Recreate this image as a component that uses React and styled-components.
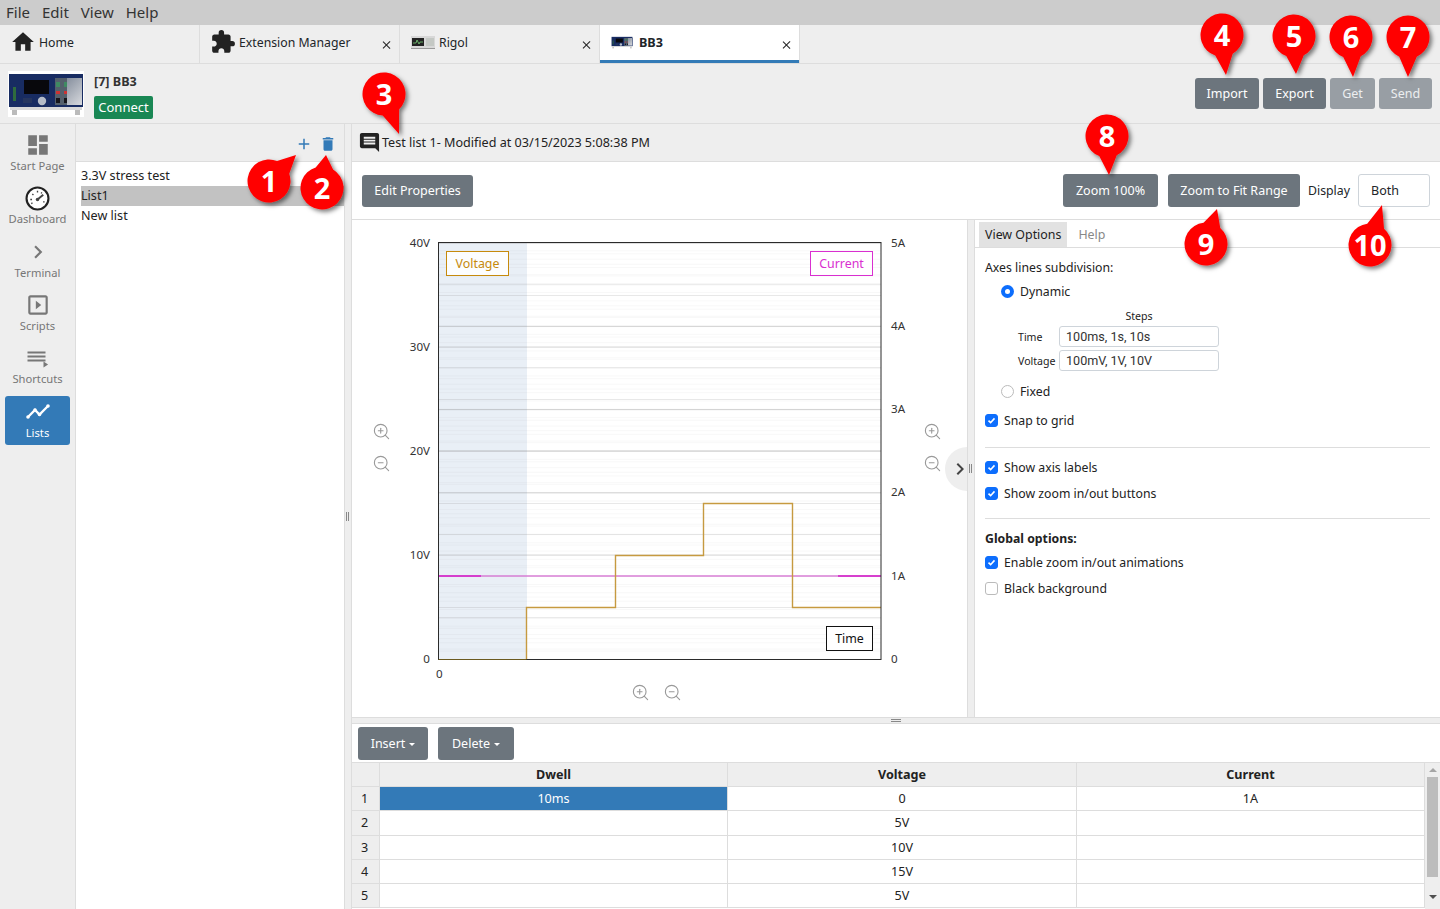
import React from 'react';
import styled, { createGlobalStyle } from 'styled-components';
import { MdHome, MdDashboard, MdChevronRight, MdSlideshow, MdDelete, MdAdd, MdMessage, MdExtension } from 'react-icons/md';
import { ZoomIn, ZoomOut } from 'lucide-react';

const UI = '"Noto Sans", "Open Sans", sans-serif';
const ALT = 'Roboto, "Noto Sans", sans-serif';

const Global = createGlobalStyle`
  html, body { margin: 0; padding: 0; background: #eee; }
  * { box-sizing: border-box; }
  body { font-family: ${UI}; color: #212529; }
`;

const Page = styled.div`
  position: relative; width: 1440px; height: 909px; overflow: hidden;
  display: flex; flex-direction: column; background: #eee; font-size: 13px;
`;
const MenuBar = styled.div`
  height: 25px; background: #ccc; display: flex; align-items: center; padding: 0 0 1px 6px; gap: 12px;
  font-size: 15px; color: #333; flex: none;
`;
const TabBar = styled.div`
  height: 39px; display: flex; flex: none; background: #eee; border-bottom: 1px solid #ddd;
`;
const Tab = styled.div`
  width: 200px; height: 38px; position: relative; display: flex; align-items: center; gap: ${p => p.$gap}px;
  padding-left: ${p => p.$pad}px; padding-bottom: 4px;
  background: ${p => (p.$active ? '#fff' : 'transparent')};
  border-right: 1px solid #ddd; font-size: ${p => (p.$active ? 12.6 : 12.27)}px;
  font-weight: ${p => (p.$active ? 700 : 400)};
  box-shadow: ${p => (p.$active ? 'inset 0 -3px 0 #337bb7' : 'none')};
`;
const TabClose = styled.span`
  position: absolute; right: 7px; top: 15px; width: 10px; height: 10px;
  &::before, &::after { content: ''; position: absolute; left: 4px; top: 0; width: 1.3px; height: 10px; background: #222; }
  &::before { transform: rotate(45deg); }
  &::after { transform: rotate(-45deg); }
`;
const PuzzleIcon = styled(MdExtension)` margin-right: -3px; color: #222; flex: none; `;
const DeviceBar = styled.div`
  height: 60px; flex: none; display: flex; align-items: center; padding: 0 8px; border-bottom: 1px solid #ddd;
`;
const DeviceInfo = styled.div`
  margin-left: 10px; display: flex; flex-direction: column; gap: 6px; align-items: flex-start; padding-top: 4px;
`;
const DeviceName = styled.div` font-weight: 700; font-size: 12.6px; line-height: 17px; color: #333; `;
const Connect = styled.div`
  background: #198754; color: #fff; border-radius: 2px; height: 23px; width: 59px; display: flex; align-items: center; justify-content: center; font-size: 13px; padding-bottom: 1px;
`;
const Spacer = styled.div` flex: 1; `;
const Actions = styled.div` display: flex; gap: 4px; `;
const Button = styled.div`
  background: ${p => (p.$off ? '#989ea4' : '#6c757d')}; color: ${p => (p.$off ? '#eceef0' : '#fff')}; border-radius: 3px;
  height: ${p => p.$h || 33}px; width: ${p => p.$w}px; display: flex; align-items: center; justify-content: center;
  font-size: 12.5px; flex: none; gap: 4px; padding-bottom: 1px;
`;
const Caret = styled.span`
  width: 0; height: 0; border-left: 3.5px solid transparent; border-right: 3.5px solid transparent; border-top: 3.5px solid #fff; margin-top: 2px;
`;
const Body = styled.div` flex: 1; display: flex; min-height: 0; `;
const Sidebar = styled.div`
  width: 76px; flex: none; border-right: 1px solid #ddd; padding: 8px 5px 0; display: flex; flex-direction: column;
`;
const NavItem = styled.div`
  height: ${p => (p.$active ? 49 : 53.3)}px; flex: none; display: flex; flex-direction: column; align-items: center;
  color: ${p => (p.$active ? '#fff' : '#767676')}; background: ${p => (p.$active ? '#337ab7' : 'transparent')};
  border-radius: 3px; font-size: 11.2px; white-space: nowrap; margin-top: ${p => (p.$active ? -2.5 : 0)}px;
`;
const NavIcon = styled.div`
  height: 26px; flex: none; display: flex; align-items: center; justify-content: center;
  margin-top: ${p => (p.$active ? 2 : 0)}px; margin-bottom: ${p => (p.$active ? 1 : 0)}px;
`;
const ListPanel = styled.div` width: 268px; flex: none; display: flex; flex-direction: column; `;
const ListHead = styled.div`
  height: 38px; flex: none; display: flex; justify-content: flex-end; align-items: center; padding: 2px 7px 0 0; gap: 6px; border-bottom: 1px solid #ddd; color: #337ab7;
`;
const ListBody = styled.div` flex: 1; background: #fff; padding-top: 4px; `;
const ListRow = styled.div`
  height: 20px; line-height: 19px; margin-left: 5px; font-size: 12.6px; color: #222;
  background: ${p => (p.$sel ? '#c2c2c2' : 'transparent')};
`;
const SplitV = styled.div`
  width: 8px; flex: none; background: #eee; border-left: 1px solid #ddd; border-right: 1px solid #ddd;
  display: flex; align-items: center; justify-content: center; gap: 1px; padding-right: 1px;
  &::before, &::after { content: ''; width: 1px; height: 9px; background: #888; }
`;
const Main = styled.div` flex: 1; min-width: 0; display: flex; flex-direction: column; `;
const MainHead = styled.div`
  height: 38px; flex: none; display: flex; align-items: center; padding-left: 6px; gap: 1px; font-size: 12.6px; border-bottom: 1px solid #ddd; color: #222;
`;
const NoteIcon = styled(MdMessage)` transform: scaleX(-1); color: #222; flex: none; `;
const Toolbar = styled.div`
  height: 58px; flex: none; background: #fff; border-bottom: 1px solid #ddd; display: flex; align-items: center; padding: 0 10px; gap: 10px;
`;
const DisplayLabel = styled.div` font-size: 12.3px; margin: 0 -2px 1px; width: 42px; flex: none; `;
const DisplaySelect = styled.div`
  width: 72px; height: 33px; border: 1px solid #ced4da; border-radius: 3px; display: flex; align-items: center; padding: 0 0 1px 12px; font-size: 12.5px; background: #fff;
`;
const Work = styled.div` height: 497px; flex: none; display: flex; background: #fff; `;
const ChartCol = styled.div` width: 615px; flex: none; position: relative; overflow: hidden; `;
const Collapse = styled.div`
  position: absolute; left: 593px; top: 227px; width: 44px; height: 44px; border-radius: 50%; background: #eee;
  display: flex; align-items: center; padding-left: 3px; color: #444;
`;
const ChartSvg = styled.svg` display: block; font-family: ${UI}; `;
const Options = styled.div` flex: 1; min-width: 0; display: flex; flex-direction: column; `;
const OptTabs = styled.div` height: 28px; flex: none; border-bottom: 1px solid #ddd; display: flex; padding: 2px 0 0 4px; `;
const OptTab = styled.div`
  height: 25px; display: flex; align-items: center; padding: 0 ${p => (p.$active ? 6 : 11)}px; font-size: 12.4px;
  background: ${p => (p.$active ? '#e2e2e2' : 'transparent')}; color: ${p => (p.$active ? '#222' : '#888')};
`;
const OptBody = styled.div` padding: 10px 10px 0; font-size: 12.27px; color: #222; `;
const OptTitle = styled.div` line-height: 20px; font-weight: ${p => (p.$bold ? 700 : 400)}; `;
const Check = styled.div`
  display: flex; align-items: center; gap: 6px; height: 20px; margin-top: ${p => p.$mt || 0}px; margin-left: ${p => p.$ml || 0}px;
`;
const Box = styled.span`
  width: 13px; height: 13px; border-radius: ${p => (p.$round ? '50%' : '3px')}; flex: none;
  background: ${p => (p.$on ? '#0d6efd' : '#fff')}; border: 1px solid ${p => (p.$on ? '#0d6efd' : '#bbb')};
  display: flex; align-items: center; justify-content: center;
  ${p => (p.$round && p.$on ? 'border-width: 0; &::after { content: ""; width: 5px; height: 5px; border-radius: 50%; background: #fff; }' : '')}
`;
const StepGrid = styled.div`
  display: grid; grid-template-columns: 41px 160px; row-gap: 3px; margin: 8px 0 0 33px; align-items: center; font-size: 10.6px;
`;
const StepHead = styled.div` grid-column: 2; text-align: center; height: 14px; line-height: 14px; `;
const StepLabel = styled.span` white-space: nowrap; `;
const StepInput = styled.div`
  height: 21px; border: 1px solid #ced4da; border-radius: 3px; display: flex; align-items: center; padding-left: 6px; font-family: ${ALT}; font-size: 12.6px; color: #333;
`;
const Rule = styled.div` height: 1px; background: #ddd; margin: ${p => p.$t}px 0 ${p => p.$b}px; `;
const SplitH = styled.div`
  height: 7px; flex: none; background: #eee; border-top: 1px solid #ddd; border-bottom: 1px solid #ddd; display: flex; flex-direction: column; align-items: center; justify-content: center; gap: 1px;
  &::before, &::after { content: ''; height: 1px; width: 10px; background: #888; }
`;
const Bottom = styled.div` flex: 1; min-height: 0; background: #fff; display: flex; flex-direction: column; `;
const TableBar = styled.div` height: 38px; flex: none; display: flex; gap: 10px; padding: 3px 6px 0; `;
const TableWrap = styled.div` flex: 1; display: flex; min-height: 0; border-top: 1px solid #ddd; `;
const Grid = styled.div`
  flex: 1; display: grid; grid-template-columns: 28px 348px 349px 1fr; grid-auto-rows: 24.2px; font-size: 12.6px; color: #222;
`;
const HeadCell = styled.div`
  background: #eee; border-right: 1px solid #ddd; border-bottom: 1px solid #ddd; display: flex; align-items: center; justify-content: center; font-weight: 700;
`;
const RowNo = styled.div`
  background: #eee; border-right: 1px solid #ddd; border-bottom: 1px solid #ddd; display: flex; align-items: center; justify-content: center; padding-right: 2px;
`;
const Cell = styled.div`
  background: ${p => (p.$sel ? '#337ab7' : '#fff')}; color: ${p => (p.$sel ? '#fff' : '#222')};
  border-right: 1px solid #ddd; border-bottom: 1px solid #ddd; display: flex; align-items: center; justify-content: center;
`;
const Scroll = styled.div`
  width: 15px; flex: none; background: #eee; display: flex; flex-direction: column; align-items: center; padding-top: 5px;
`;
const ArrowUp = styled.span` width: 0; height: 0; border-left: 4px solid transparent; border-right: 4px solid transparent; border-bottom: 4px solid #a5a5a5; `;
const ArrowDown = styled.span` width: 0; height: 0; border-left: 4px solid transparent; border-right: 4px solid transparent; border-top: 4px solid #505050; margin-top: 18px; `;
const Thumb = styled.div` width: 11px; height: 100px; background: #bcbcbc; margin-top: 5px; `;
const Overlay = styled.svg` position: absolute; left: 0; top: 0; pointer-events: none; font-family: ${UI}; `;

const DeviceArt = ({ w, h }) => (
  <svg width={w} height={h} viewBox="0 0 76 46" style={{ flex: 'none', display: 'block' }}>
    <defs>
      <linearGradient id="panelGrad" x1="0" y1="0" x2="1" y2="1">
        <stop offset="0" stopColor="#6f7a8c" />
        <stop offset="1" stopColor="#d8dade" />
      </linearGradient>
    </defs>
    <rect width="76" height="46" fill="#fff" />
    <rect x="3" y="7" width="72" height="28" fill="#243a74" />
    <rect x="1" y="3" width="74" height="33" fill="#182c62" />
    <rect x="16" y="9" width="25" height="14" fill="#08080c" />
    <rect x="47" y="7" width="27" height="27" fill="url(#panelGrad)" />
    <rect x="47" y="7" width="12" height="27" fill="#54606c" />
    <rect x="48" y="20" width="4" height="3" fill="#c33" />
    <rect x="56" y="20" width="3" height="3" fill="#c33" />
    <rect x="48" y="11" width="4" height="5" fill="#3f8a62" />
    <rect x="56" y="11" width="3" height="5" fill="#3f8a62" />
    <rect x="48" y="27" width="4" height="5" fill="#15151b" />
    <rect x="56" y="27" width="3" height="5" fill="#15151b" />
    <circle cx="34" cy="30" r="4.2" fill="#b5bcc8" />
    <rect x="5" y="16" width="3" height="14" fill="#2f6c3d" />
    <rect x="15" y="27" width="9" height="5" fill="#26365f" />
    <rect x="2" y="36" width="72" height="3" fill="#d8d8d8" />
    <rect x="4" y="39" width="5" height="5" fill="#bbb" />
    <rect x="67" y="39" width="5" height="5" fill="#bbb" />
  </svg>
);
const RigolArt = () => (
  <svg width="24" height="13" viewBox="0 0 24 13" style={{ flex: 'none' }}>
    <rect width="24" height="12" fill="#d8d8d8" />
    <rect x="1" y="2" width="12" height="8" fill="#222" />
    <path d="M2 7h3l1-3 2 4 1-2h3" stroke="#7c7" strokeWidth=".8" fill="none" />
    <rect x="15" y="2" width="8" height="8" fill="#c4c8c4" />
    <rect x="0" y="12" width="24" height="1" fill="#999" />
  </svg>
);
const Gauge = () => (
  <svg width="25" height="25" viewBox="0 0 26 26">
    <circle cx="13" cy="13" r="11.4" fill="#fff" stroke="#222" strokeWidth="2.2" />
    <path d="M13 14l6-5" stroke="#444" strokeWidth="2" />
    <circle cx="13" cy="14" r="1.8" fill="#444" />
    <path d="M5.5 14h1.8M7.6 8.3l1.2 1.1M13 5v1.7M17.5 6.6l-.7 1.2M18.8 16.5h1.6M6.5 18.3l1.3-.7" stroke="#444" strokeWidth="1.4" />
  </svg>
);
const ShortcutsIcon = () => (
  <svg width="26" height="26" viewBox="0 0 26 26">
    <path d="M2.5 7.5h18M2.5 11.5h18M2.5 15.5h18" stroke="#777" strokeWidth="2" fill="none" />
    <path d="M18.5 16.5l4.6 3-4.6 3z" fill="#777" />
  </svg>
);
const ListsIcon = () => (
  <svg width="26" height="26" viewBox="0 0 26 26">
    <path d="M3 19l7-7 4.5 4.5L23 8" stroke="#fff" strokeWidth="2.3" fill="none" />
    <g fill="#fff"><circle cx="3" cy="19" r="1.8" /><circle cx="10" cy="12" r="1.8" /><circle cx="14.5" cy="16.5" r="1.8" /><circle cx="23" cy="8" r="1.8" /></g>
  </svg>
);

const PLOT = { l: 438.5, r: 881, t: 242.5, b: 659.5 };
const range = (n, f) => Array.from({ length: n }, (_, i) => f(i));
const fine = [...range(41, i => 659.5 - i * 10.4), ...range(51, i => 659.5 - i * 8.34)];
const mid = [...range(9, i => 659.5 - i * 52).filter((_, i) => i % 2), ...range(11, i => 659.5 - i * 41.7).filter((_, i) => i % 2)];
const major = [...range(3, i => 555 - i * 104), ...range(4, i => 492.8 - i * 83.2)];
const leftTicks = [['40V', 243], ['30V', 347], ['20V', 451], ['10V', 555], ['0', 659]];
const rightTicks = [['5A', 243], ['4A', 326], ['3A', 409], ['2A', 492], ['1A', 576], ['0', 659]];

const Legend = ({ x, y, w, color, children }) => (
  <g>
    <rect x={x} y={y} width={w} height={24} fill="#fff" stroke={color} strokeWidth="1" fillOpacity=".85" />
    <text x={x + w / 2} y={y + 16} textAnchor="middle" fontSize="12.4" fill={color}>{children}</text>
  </g>
);

const Chart = () => (
  <ChartSvg width="615" height="497" viewBox="352 220 615 497">
    <rect x={PLOT.l} y={PLOT.t} width={88.5} height={417} fill="#e9eff6" />
    {fine.map((y, i) => <line key={i} x1={PLOT.l} x2={PLOT.r} y1={y} y2={y} stroke="#8a8a8a" strokeOpacity=".06" strokeWidth="1" />)}
    {mid.map((y, i) => <line key={i} x1={PLOT.l} x2={PLOT.r} y1={y} y2={y} stroke="#8a8a8a" strokeOpacity=".14" strokeWidth="1" />)}
    {major.map((y, i) => <line key={i} x1={PLOT.l} x2={PLOT.r} y1={y} y2={y} stroke="#8a8a8a" strokeOpacity=".32" strokeWidth="1" />)}
    <line x1={PLOT.l} x2={PLOT.r} y1="576" y2="576" stroke="#d97fd6" strokeWidth="1.4" />
    <line x1={PLOT.l} x2="481" y1="576" y2="576" stroke="#d321c9" strokeWidth="1.4" />
    <line x1="838" x2={PLOT.r} y1="576" y2="576" stroke="#d321c9" strokeWidth="1.4" />
    <path d="M526.5 659.5V607.5H615.5V555.5H703.5V503.5H792.5V607.5H881" fill="none" stroke="#c69a40" strokeWidth="1.4" />
    <rect x={PLOT.l} y={PLOT.t} width={PLOT.r - PLOT.l} height={PLOT.b - PLOT.t} fill="none" stroke="#2b2b2b" strokeWidth="1" />
    <line x1={PLOT.l} x2="526.5" y1="659.5" y2="659.5" stroke="#6b5a20" strokeWidth="1" />
    {leftTicks.map(([t, y]) => <text key={t} x="430" y={y + 4} textAnchor="end" fontSize="11.6" fill="#333">{t}</text>)}
    {rightTicks.map(([t, y]) => <text key={t} x="891" y={y + 4} fontSize="11.6" fill="#333">{t}</text>)}
    <text x="436" y="678" fontSize="11.6" fill="#333">0</text>
    <Legend x={446.5} y={251.5} w={62} color="#c68a0c">Voltage</Legend>
    <Legend x={810.5} y={251.5} w={62} color="#d92fd0">Current</Legend>
    <Legend x={826.5} y={626.5} w={46} color="#111">Time</Legend>
    <ZoomIn x={372} y={422} size={19} strokeWidth={1.4} color="#999" />
    <ZoomOut x={372} y={454} size={19} strokeWidth={1.4} color="#999" />
    <ZoomIn x={923} y={422} size={19} strokeWidth={1.4} color="#999" />
    <ZoomOut x={923} y={454} size={19} strokeWidth={1.4} color="#999" />
    <ZoomIn x={631} y={683} size={19} strokeWidth={1.4} color="#999" />
    <ZoomOut x={663} y={683} size={19} strokeWidth={1.4} color="#999" />
  </ChartSvg>
);

const pins = [
  [1, 269, 181, 296, 155], [2, 322, 188, 326, 155], [3, 384, 94, 399, 134], [4, 1222, 35, 1226, 75],
  [5, 1294, 36, 1296, 74], [6, 1351, 37, 1353, 77], [7, 1408, 37, 1408, 77], [8, 1107, 136, 1109, 175],
  [9, 1206, 244, 1217, 209], [10, 1370, 245, 1382, 205],
];
const Pin = ({ n, cx, cy, tx, ty }) => {
  const r = 21.5, a = Math.atan2(ty - cy, tx - cx), s = 0.42;
  const p1 = [cx + r * Math.cos(a - s), cy + r * Math.sin(a - s)];
  const p2 = [cx + r * Math.cos(a + s), cy + r * Math.sin(a + s)];
  return (
    <g>
      <path d={`M${p1[0]} ${p1[1]}L${tx} ${ty}L${p2[0]} ${p2[1]}A${r} ${r} 0 1 1 ${p1[0]} ${p1[1]}Z`} fill="#f00" filter="url(#pinShadow)" />
      <text x={cx} y={cy + 10.5} textAnchor="middle" fontSize="29" fontWeight="700" fill="#fff">{n}</text>
    </g>
  );
};

const CheckMark = () => (
  <svg width="9" height="9" viewBox="0 0 9 9"><path d="M1.5 4.7L3.6 6.7 7.5 2.4" fill="none" stroke="#fff" strokeWidth="1.6" /></svg>
);

const rows = [['1', '10ms', '0', '1A'], ['2', '', '5V', ''], ['3', '', '10V', ''], ['4', '', '15V', ''], ['5', '', '5V', '']];

export default function App() {
  return (
    <Page>
      <Global />
      <MenuBar><span>File</span><span>Edit</span><span>View</span><span>Help</span></MenuBar>
      <TabBar>
        <Tab $pad={10} $gap={3}><MdHome size={26} color="#222" />Home</Tab>
        <Tab $pad={10} $gap={6}><PuzzleIcon size={26} />Extension Manager<TabClose /></Tab>
        <Tab $pad={11} $gap={4}><RigolArt />Rigol<TabClose /></Tab>
        <Tab $pad={10} $gap={5} $active><DeviceArt w={24} h={13} />BB3<TabClose /></Tab>
      </TabBar>
      <DeviceBar>
        <DeviceArt w={76} h={46} />
        <DeviceInfo>
          <DeviceName>[7] BB3</DeviceName>
          <Connect>Connect</Connect>
        </DeviceInfo>
        <Spacer />
        <Actions>
          <Button $w={64} $h={31}>Import</Button>
          <Button $w={63} $h={31}>Export</Button>
          <Button $w={45} $h={31} $off>Get</Button>
          <Button $w={53} $h={31} $off>Send</Button>
        </Actions>
      </DeviceBar>
      <Body>
        <Sidebar>
          <NavItem><NavIcon><MdDashboard size={26} color="#777" /></NavIcon>Start Page</NavItem>
          <NavItem><NavIcon><Gauge /></NavIcon>Dashboard</NavItem>
          <NavItem><NavIcon><MdChevronRight size={26} color="#777" /></NavIcon>Terminal</NavItem>
          <NavItem><NavIcon><MdSlideshow size={26} color="#777" /></NavIcon>Scripts</NavItem>
          <NavItem><NavIcon><ShortcutsIcon /></NavIcon>Shortcuts</NavItem>
          <NavItem $active><NavIcon $active><ListsIcon /></NavIcon>Lists</NavItem>
        </Sidebar>
        <ListPanel>
          <ListHead><MdAdd size={18} /><MdDelete size={18} /></ListHead>
          <ListBody>
            <ListRow>3.3V stress test</ListRow>
            <ListRow $sel>List1</ListRow>
            <ListRow>New list</ListRow>
          </ListBody>
        </ListPanel>
        <SplitV />
        <Main>
          <MainHead><NoteIcon size={23} />Test list 1- Modified at 03/15/2023 5:08:38 PM</MainHead>
          <Toolbar>
            <Button $w={111} $h={32}>Edit Properties</Button>
            <Spacer />
            <Button $w={95} $h={33}>Zoom 100%</Button>
            <Button $w={132} $h={33}>Zoom to Fit Range</Button>
            <DisplayLabel>Display</DisplayLabel>
            <DisplaySelect>Both</DisplaySelect>
          </Toolbar>
          <Work>
            <ChartCol>
              <Chart />
              <Collapse><MdChevronRight size={24} /></Collapse>
            </ChartCol>
            <SplitV />
            <Options>
              <OptTabs><OptTab $active>View Options</OptTab><OptTab>Help</OptTab></OptTabs>
              <OptBody>
                <OptTitle>Axes lines subdivision:</OptTitle>
                <Check $ml={16} $mt={3}><Box $round $on />Dynamic</Check>
                <StepGrid>
                  <StepHead>Steps</StepHead>
                  <StepLabel>Time</StepLabel><StepInput>100ms, 1s, 10s</StepInput>
                  <StepLabel>Voltage</StepLabel><StepInput>100mV, 1V, 10V</StepInput>
                </StepGrid>
                <Check $ml={16} $mt={10}><Box $round />Fixed</Check>
                <Check $mt={9}><Box $on><CheckMark /></Box>Snap to grid</Check>
                <Rule $t={17} $b={9} />
                <Check><Box $on><CheckMark /></Box>Show axis labels</Check>
                <Check $mt={6}><Box $on><CheckMark /></Box>Show zoom in/out buttons</Check>
                <Rule $t={15} $b={10} />
                <OptTitle $bold>Global options:</OptTitle>
                <Check $mt={3}><Box $on><CheckMark /></Box>Enable zoom in/out animations</Check>
                <Check $mt={6}><Box />Black background</Check>
              </OptBody>
            </Options>
          </Work>
          <SplitH />
          <Bottom>
            <TableBar>
              <Button $w={70} $h={33}>Insert<Caret /></Button>
              <Button $w={76} $h={33}>Delete<Caret /></Button>
            </TableBar>
            <TableWrap>
              <Grid>
                <HeadCell /><HeadCell>Dwell</HeadCell><HeadCell>Voltage</HeadCell><HeadCell>Current</HeadCell>
                {rows.map((r, i) => (
                  <React.Fragment key={r[0]}>
                    <RowNo>{r[0]}</RowNo>
                    <Cell $sel={i === 0}>{r[1]}</Cell>
                    <Cell>{r[2]}</Cell>
                    <Cell>{r[3]}</Cell>
                  </React.Fragment>
                ))}
              </Grid>
              <Scroll><ArrowUp /><Thumb /><ArrowDown /></Scroll>
            </TableWrap>
          </Bottom>
        </Main>
      </Body>
      <Overlay width="1440" height="909" viewBox="0 0 1440 909">
        <defs>
          <filter id="pinShadow" x="-30%" y="-30%" width="170%" height="170%">
            <feDropShadow dx="2.5" dy="2.5" stdDeviation="2" floodColor="#000" floodOpacity=".5" />
          </filter>
        </defs>
        {pins.map(([n, cx, cy, tx, ty]) => <Pin key={n} n={n} cx={cx} cy={cy} tx={tx} ty={ty} />)}
      </Overlay>
    </Page>
  );
}
